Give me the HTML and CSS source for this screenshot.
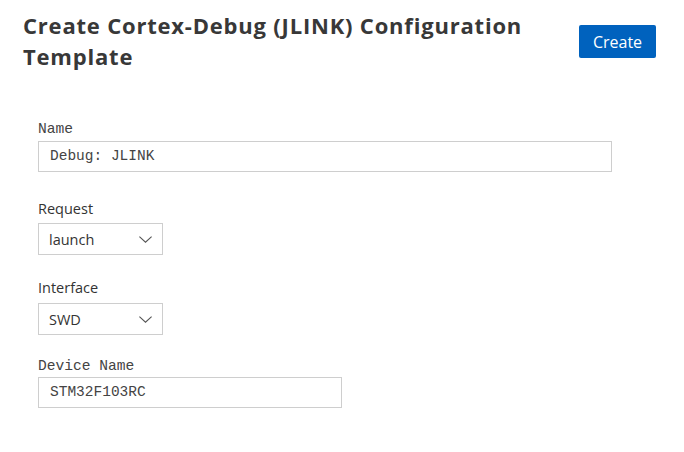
FILE: index.html
```html
<!DOCTYPE html>
<html>
<head>
<meta charset="utf-8">
<link rel="stylesheet" href="styles.css">
</head>
<body>
<div class="page">
  <header class="header">
    <h1 class="title">Create Cortex-Debug (JLINK) Configuration Template</h1>
    <button class="btn-primary">Create</button>
  </header>
  <form class="form">
    <div class="field field-name">
      <label class="label mono">Name</label>
      <div class="textbox wide mono">Debug: JLINK</div>
    </div>
    <div class="field field-request">
      <label class="label sans">Request</label>
      <div class="select"><span>launch</span><svg class="chev" width="13" height="7" viewBox="0 0 13 7"><path d="M0.4 0.6 L6.5 6.2 L12.6 0.6" fill="none" stroke="#555" stroke-width="1.1"/></svg></div>
    </div>
    <div class="field field-interface">
      <label class="label sans">Interface</label>
      <div class="select"><span>SWD</span><svg class="chev" width="13" height="7" viewBox="0 0 13 7"><path d="M0.4 0.6 L6.5 6.2 L12.6 0.6" fill="none" stroke="#555" stroke-width="1.1"/></svg></div>
    </div>
    <div class="field field-device">
      <label class="label mono">Device Name</label>
      <div class="textbox medium mono">STM32F103RC</div>
    </div>
  </form>
</div>
</body>
</html>
```

FILE: styles.css
```css
html, body {
  margin: 0;
  padding: 0;
  background: #ffffff;
}
body {
  font-family: "Open Sans", "Noto Sans", sans-serif;
  color: #333333;
}
.page {
  padding: 10px 28px 0 23px;
}
.header {
  display: flex;
  justify-content: space-between;
  align-items: flex-start;
}
.title {
  margin: 0;
  font-size: 22px;
  line-height: 31px;
  font-weight: 700;
  letter-spacing: 0.8px;
  color: #383838;
  max-width: 530px;
}
.btn-primary {
  margin-top: 15px;
  width: 77px;
  height: 33px;
  border: none;
  border-radius: 2px;
  background: #0062be;
  color: #ffffff;
  font-family: "Open Sans", sans-serif;
  font-size: 16px;
  padding: 0;
}
.form {
  margin-top: 48px;
  padding-left: 15px;
  display: flex;
  flex-direction: column;
}
.field {
  display: flex;
  flex-direction: column;
  align-items: flex-start;
}
.field-name { margin-bottom: 27px; }
.field-request { margin-bottom: 23px; }
.field-interface { margin-bottom: 22px; }
.label {
  display: block;
  color: #333;
}
.label.mono {
  font-family: "Liberation Mono", monospace;
  font-size: 14.6px;
  line-height: 18px;
  margin-bottom: 3px;
  color: #444;
}
.field-device .label.mono { margin-bottom: 2px; }
.label.sans {
  font-family: "Open Sans", sans-serif;
  font-size: 14.5px;
  line-height: 20px;
  margin-bottom: 4px;
}
.field-interface .label.sans { margin-bottom: 5px; }
.mono {
  font-family: "Liberation Mono", monospace;
}
.textbox {
  box-sizing: border-box;
  height: 31px;
  border: 1px solid #cecece;
  padding: 0 11px;
  font-size: 14.5px;
  line-height: 29px;
  color: #444;
}
.textbox.wide { width: 574px; }
.textbox.medium { width: 304px; }
.select {
  box-sizing: border-box;
  width: 125px;
  height: 32px;
  border: 1px solid #cecece;
  padding: 0 10px 0 10px;
  display: flex;
  align-items: center;
  justify-content: space-between;
  font-family: "Open Sans", sans-serif;
  font-size: 14.5px;
  color: #333;
}
.chev { display: block; }
```
